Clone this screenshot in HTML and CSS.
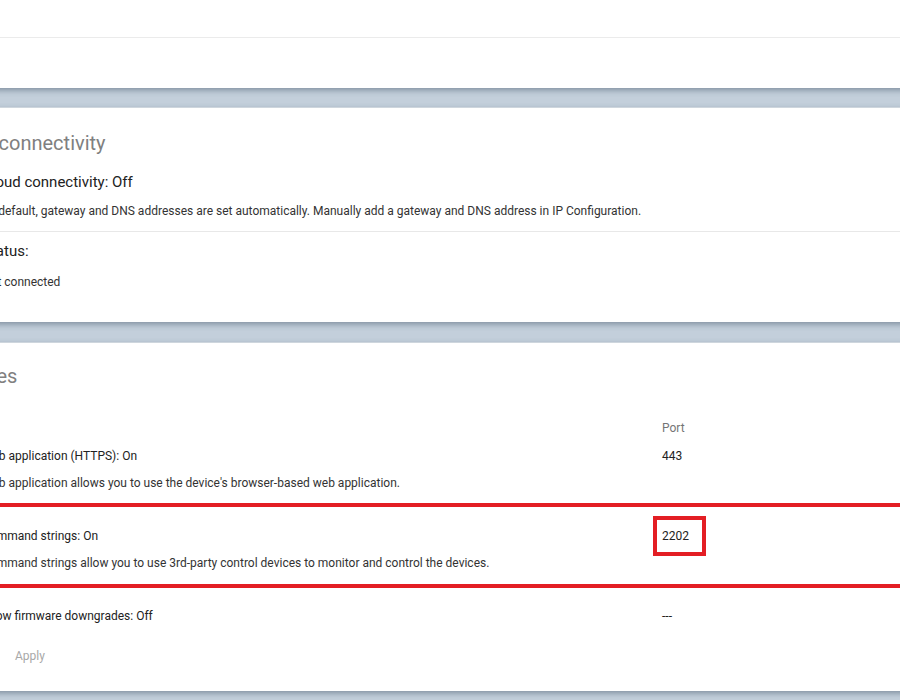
FILE: index.html
```html
<!DOCTYPE html>
<html lang="en">
<head>
<meta charset="utf-8">
<title>Network settings</title>
<link rel="stylesheet" href="styles.css">
</head>
<body>
<div class="page">
  <header class="topbar">
    <div class="topbar-row"></div>
    <div class="topbar-row tall"></div>
  </header>

  <section class="card card-cloud">
    <h2 class="card-title">Cloud connectivity</h2>
    <div class="item">
      <div class="label big">Cloud connectivity: Off</div>
      <div class="desc">By default, gateway and DNS addresses are set automatically. Manually add a gateway and DNS address in IP Configuration.</div>
    </div>
    <hr class="divider">
    <div class="item status">
      <div class="label big">Status:</div>
      <div class="desc">Not connected</div>
    </div>
  </section>

  <section class="card card-services">
    <h2 class="card-title">Services</h2>
    <div class="svc-row head">
      <div></div>
      <div class="col-head">Port</div>
    </div>
    <div class="svc-row first">
      <div>
        <div class="label">Web application (HTTPS): On</div>
        <div class="desc">Web application allows you to use the device's browser-based web application.</div>
      </div>
      <div class="port">443</div>
    </div>
    <div class="svc-row marked">
      <div>
        <div class="label">Command strings: On</div>
        <div class="desc">Command strings allow you to use 3rd-party control devices to monitor and control the devices.</div>
      </div>
      <div class="port"><span class="boxed">2202</span></div>
    </div>
    <div class="svc-row last">
      <div>
        <div class="label">Allow firmware downgrades: Off</div>
      </div>
      <div class="port">---</div>
    </div>
    <div class="actions">
      <button class="btn-flat" type="button" disabled>Apply</button>
    </div>
  </section>
</div>
</body>
</html>
```

FILE: styles.css
```css
html, body {
  margin: 0;
  padding: 0;
}

body {
  background: #c3cfdb;
  font-family: Roboto, "Noto Sans", Arial, sans-serif;
  color: #212121;
  overflow: hidden;
  height: 700px;
}

.page {
  margin-left: -74px;
  margin-right: -20px;
}

/* top app bar */
.topbar {
  background: #ffffff;
  box-shadow: 0 2px 6px rgba(40, 60, 80, 0.45);
  position: relative;
  z-index: 2;
}

.topbar-row {
  height: 37px;
  border-bottom: 1px solid #ebebeb;
}

.topbar-row.tall {
  height: 50px;
  border-bottom: 0;
}

/* cards */
.card {
  background: #ffffff;
  margin-top: 20px;
  box-shadow: 0 2px 6px rgba(40, 60, 80, 0.45), 0 -1px 0 rgba(255, 255, 255, 0.5);
  position: relative;
}

.card-title {
  margin: 0;
  padding-left: 16px;
  font-size: 20px;
  line-height: 28px;
  font-weight: 400;
  color: #808080;
}

.label {
  font-size: 12px;
  line-height: 18px;
  color: #222222;
}

.label.big {
  font-size: 15px;
  line-height: 24px;
}

.desc {
  font-size: 12px;
  line-height: 18px;
  color: #333333;
}

/* cloud card */
.card-cloud {
  padding: 21px 0 31px;
}

.card-cloud .item {
  padding-left: 56px;
}

.card-cloud .card-title {
  margin-bottom: 13px;
}

.card-cloud .item .desc {
  margin-top: 8px;
}

.divider {
  border: 0;
  border-top: 1px solid #e8e8e8;
  margin: 11px 0 7px;
}

.card-cloud .status .desc {
  margin-top: 10px;
}

/* services card */
.card-services {
  margin-top: 21px;
  padding: 19px 0 22px;
}

.svc-row {
  display: grid;
  grid-template-columns: 680px 1fr;
  padding-left: 56px;
}

.svc-row.head {
  margin-top: 29px;
}

.col-head {
  font-size: 12px;
  line-height: 18px;
  color: #757575;
}

.svc-row .desc {
  margin-top: 9px;
}

.svc-row.first {
  padding-top: 10px;
  padding-bottom: 11px;
}

.svc-row.marked {
  border-top: 4px solid #e31e24;
  border-bottom: 4px solid #e31e24;
  padding-top: 20px;
  padding-bottom: 12px;
}

.svc-row.last {
  padding-top: 19px;
}

.port {
  font-size: 12px;
  line-height: 18px;
  color: #222222;
}

/* outlined value in the command strings row */
.boxed {
  position: relative;
  display: inline-block;
}

.boxed::after {
  content: "";
  position: absolute;
  left: -9px;
  top: -11px;
  width: 45px;
  height: 32px;
  border: 4px solid #e31e24;
}

.actions {
  padding-left: 81px;
  margin-top: 18px;
}

.btn-flat {
  font-family: inherit;
  font-size: 12px;
  line-height: 18px;
  padding: 4px 8px;
  border: 0;
  background: transparent;
  color: #a8a8a8;
}
```
